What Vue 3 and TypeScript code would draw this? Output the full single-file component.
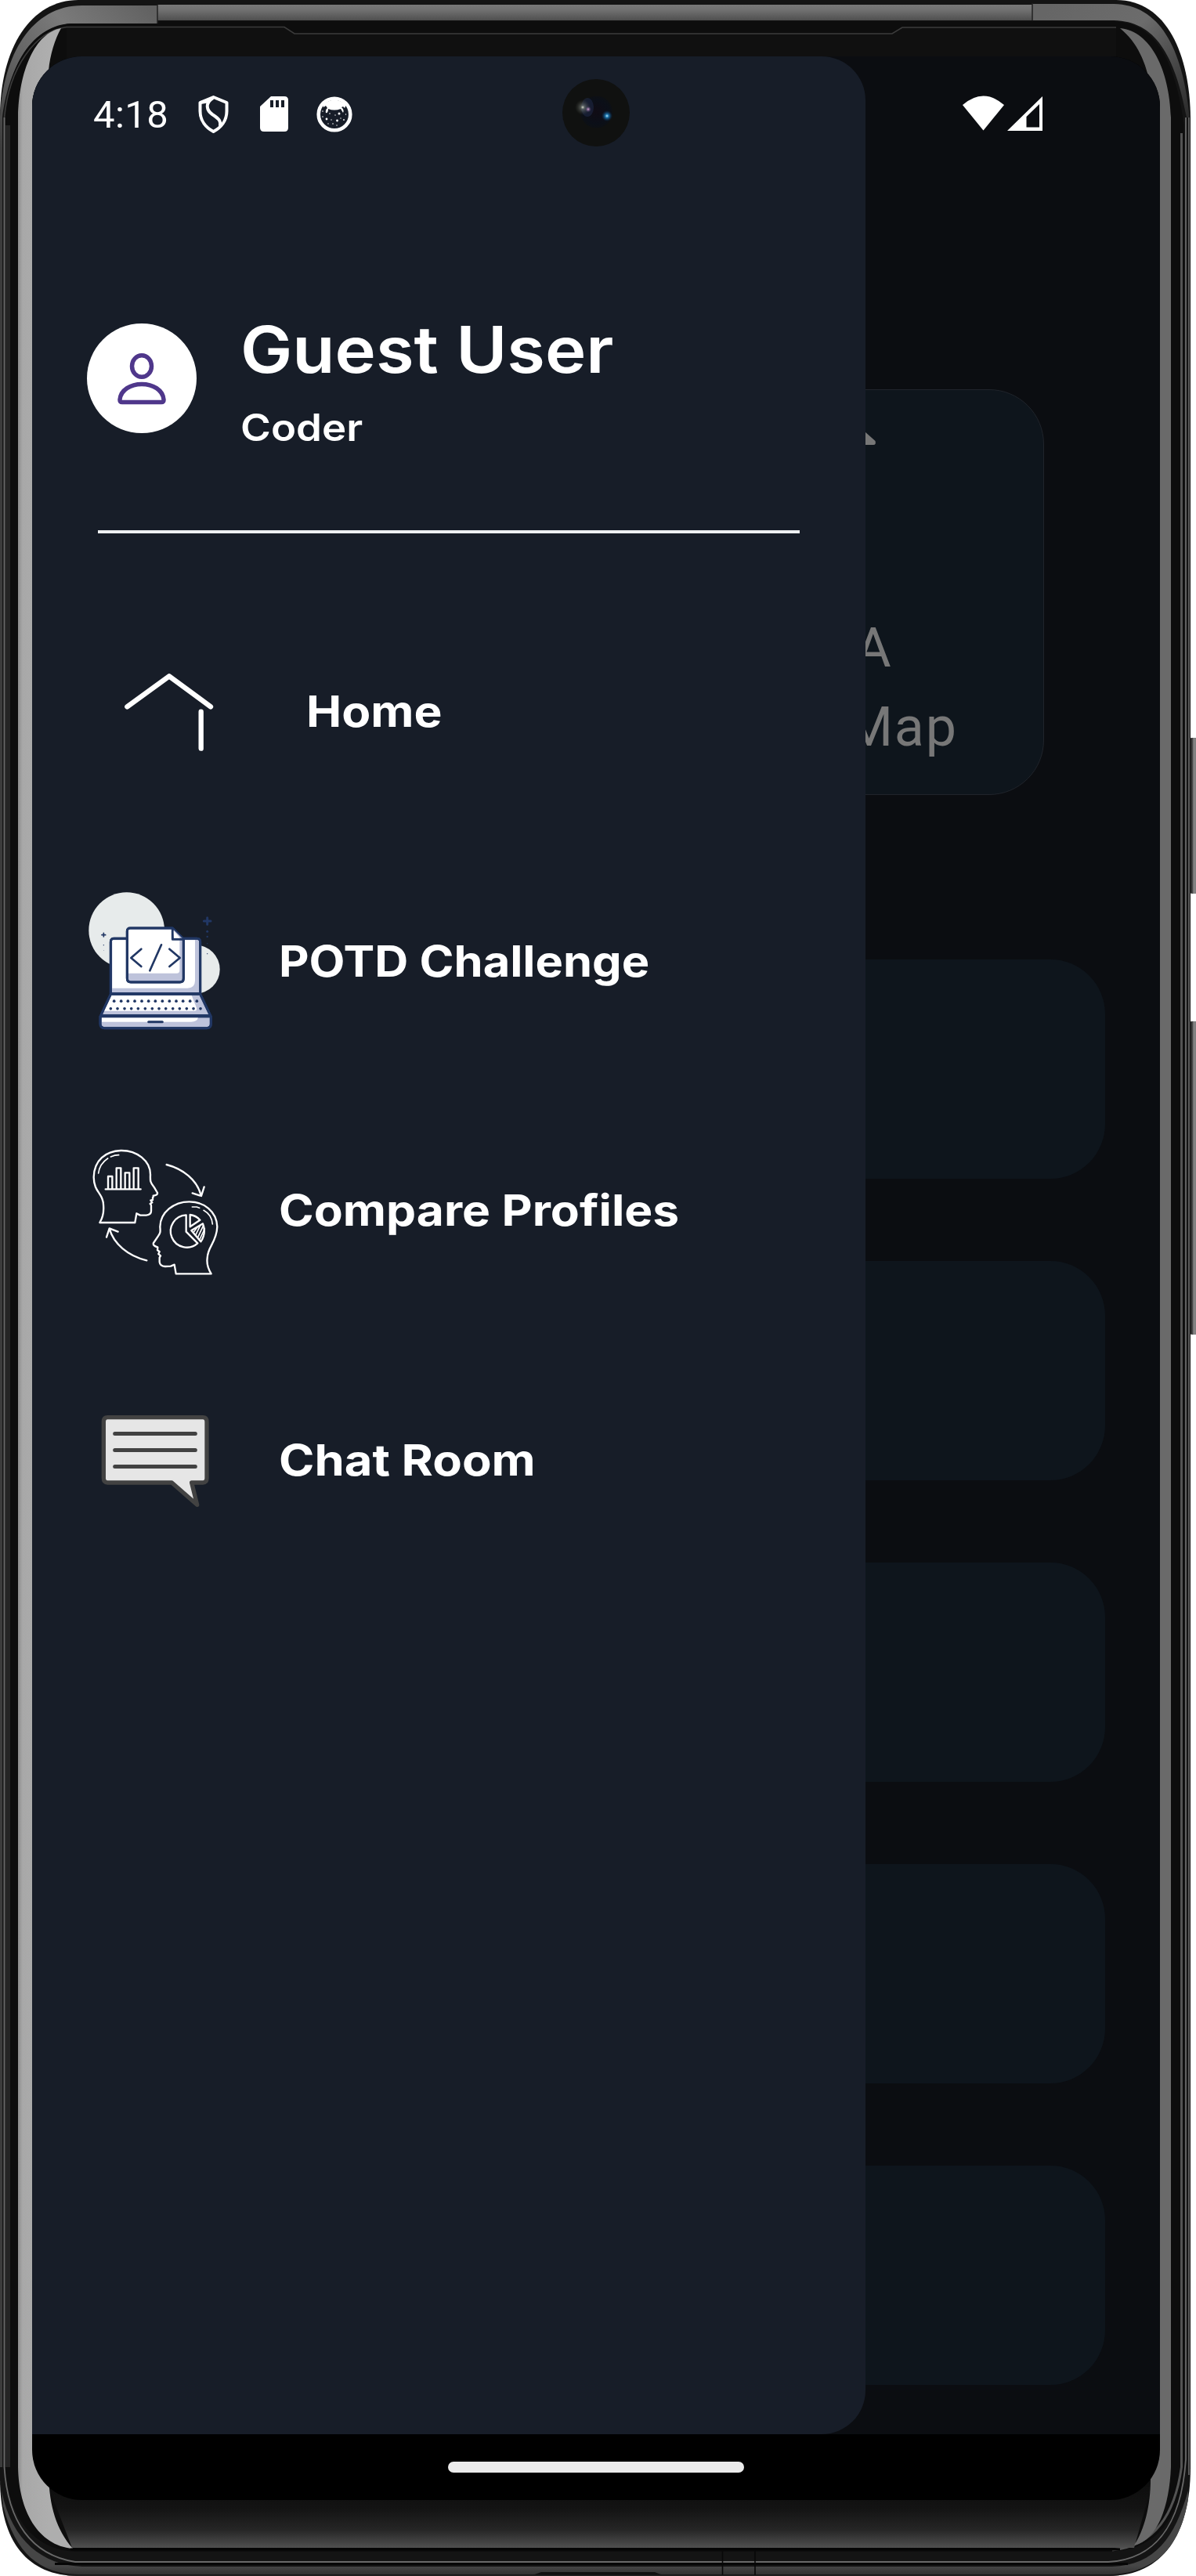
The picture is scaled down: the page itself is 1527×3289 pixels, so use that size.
<script setup lang="ts">
interface MenuItem {
  id: string
  label: string
  stretch: number
}

const menu: MenuItem[] = [
  { id: 'home', label: 'Home', stretch: 1.1 },
  { id: 'potd', label: 'POTD Challenge', stretch: 1.083 },
  { id: 'compare', label: 'Compare Profiles', stretch: 1.1 },
  { id: 'chat', label: 'Chat Room', stretch: 1.118 },
]

const user = { name: 'Guest User', role: 'Coder' }
const topKeys = [167, 194, 220, 246, 273, 299, 325, 352, 379, 405, 431, 458, 484]
const bottomKeys = [154, 180, 207, 233, 259, 286, 313, 339, 365, 392, 418, 445, 471, 498]
</script>

<template>
  <div class="device">
    <svg class="bezel" viewBox="0 0 1527 3289" aria-hidden="true">
      <defs>
        <linearGradient id="topBand" x1="0" y1="5" x2="0" y2="28" gradientUnits="userSpaceOnUse">
          <stop offset="0" stop-color="#7a7a7a" />
          <stop offset=".35" stop-color="#707070" />
          <stop offset="1" stop-color="#4a4a4a" />
        </linearGradient>
        <linearGradient id="cornerLeft" x1="190" y1="10" x2="0" y2="190" gradientUnits="userSpaceOnUse">
          <stop offset="0" stop-color="#626262" />
          <stop offset=".35" stop-color="#7a7a7a" />
          <stop offset=".65" stop-color="#626262" />
          <stop offset="1" stop-color="#3c3c3c" />
        </linearGradient>
        <linearGradient id="cornerRight" x1="1340" y1="10" x2="1520" y2="180" gradientUnits="userSpaceOnUse">
          <stop offset="0" stop-color="#666" />
          <stop offset=".4" stop-color="#6c6c6c" />
          <stop offset=".7" stop-color="#444" />
          <stop offset="1" stop-color="#202020" />
        </linearGradient>
        <linearGradient id="chin" x1="0" y1="0" x2="0" y2="1">
          <stop offset="0" stop-color="#0e0e0e" />
          <stop offset=".35" stop-color="#131313" />
          <stop offset=".7" stop-color="#252525" />
          <stop offset="1" stop-color="#505050" />
        </linearGradient>
        <linearGradient id="lowBand" x1="0" y1="3276" x2="0" y2="3288" gradientUnits="userSpaceOnUse">
          <stop offset="0" stop-color="#464646" />
          <stop offset="1" stop-color="#303030" />
        </linearGradient>
        <linearGradient id="glassLeft" x1="23" y1="0" x2="62" y2="0" gradientUnits="userSpaceOnUse">
          <stop offset="0" stop-color="#8d8d8d" />
          <stop offset=".15" stop-color="#a8a8a8" />
          <stop offset="1" stop-color="#aeaeae" />
        </linearGradient>
        <linearGradient id="key" x1="0" y1="0" x2="1" y2="0">
          <stop offset="0" stop-color="#1d1d1d" />
          <stop offset=".35" stop-color="#333" />
          <stop offset=".5" stop-color="#858585" />
          <stop offset="1" stop-color="#777" />
        </linearGradient>
        <clipPath id="body">
          <path d="M100 0H1425C1490 0 1519 70 1520 150V3150C1520 3235 1485 3289 1415 3289H100C35 3289 0 3245 0 3165V150C0 60 40 0 100 0Z" />
        </clipPath>
      </defs>
      <rect x="1517" y="942" width="14" height="199" rx="5" fill="url(#key)" />
      <rect x="1517" y="1304" width="14" height="400" rx="5" fill="url(#key)" />
      <g clip-path="url(#body)">
        <rect width="1527" height="3289" fill="#141414" />
        <path d="M0 3150V150C4 70 40 7 105 7H201V30H90C45 32 12 80 3 150V3150Z" fill="url(#cornerLeft)" />
        <path d="M201 6H1318V26H201Z" fill="url(#topBand)" />
        <path d="M1318 5H1422C1480 6 1510 60 1519 150H1515C1500 70 1475 27 1422 26H1318Z" fill="url(#cornerRight)" />
        <path d="M7 230V150C10 85 40 31 95 30H201V27H1420C1475 28 1500 75 1512 160V3140C1510 3210 1480 3257 1415 3258H100C40 3257 10 3210 7 3150Z" fill="#0d0d0d" />
        <path d="M201 6V30M1318 4V26" stroke="#222" stroke-width="1.5" />
        <path d="M85 35H363L376 43H1139L1152 35H1425V80H85Z" fill="#101010" />
        <path d="M5.500 3150V150C12 85 45 40 85 34.500H363L376 43H1139L1152 35H1425" fill="none" stroke="#3b3b3b" stroke-width="1.600" />
        <path d="M5.500 150V3150C10 3220 40 3262 96 3271H1415C1470 3268 1508 3230 1514 3140V150" fill="none" stroke="#696969" stroke-width="1.800" />
        <path d="M10 160V3150" stroke="#252525" stroke-width="6" />
        <path d="M1508.500 170V3150C1500 3210 1475 3250 1420 3256" fill="none" stroke="#535353" stroke-width="3" />
        <path d="M1518 150V3160" stroke="#5a5a5a" stroke-width="2" />
        <path d="M62 3175H1470L1448 3253H92Z" fill="url(#chin)" />
        <path d="M78 36C45 42 24 90 23 150V3150C24 3205 48 3250 93 3254C72 3230 63 3200 62 3160V90C64 70 70 50 78 36Z" fill="url(#glassLeft)" />
        <path d="M1430 36C1470 40 1493 90 1495 150V3150C1493 3200 1478 3243 1448 3250C1461 3230 1469 3200 1469 3165V110C1463 80 1453 55 1430 36Z" fill="#6a6a6a" />
        <path d="M90 3255H1430" stroke="#050505" stroke-width="3" />
        <path d="M2 3180C15 3245 55 3275 105 3277H1420C1475 3275 1500 3240 1517 3180V3210C1500 3260 1465 3287 1415 3287H100C50 3286 20 3260 4 3200Z" fill="url(#lowBand)" />
        <path d="M70 3273.500H1440" stroke="#070707" stroke-width="3" />
        <path d="M680 3288L691 3284H836L846 3288Z" fill="#111" />
        <path d="M922.500 3257V3288M964 3257V3288" stroke="#080808" stroke-width="1.600" />
        <path d="M80 3288.500H1440" stroke="#222" stroke-width="1.500" />
      </g>
    </svg>

    <div class="screen">
      <div class="app">
        <main class="page">
          <section class="feature">
            <svg class="feature-icon" viewBox="0 0 60 17" preserveAspectRatio="xMinYMin slice"><path d="M0 0H32L45.500 12Q47 17 43 17H0Z" fill="#777" /></svg>
            <div class="feature-text">
              <span>A</span>
              <span>Map</span>
            </div>
          </section>
          <section class="list">
            <div v-for="n in 5" :key="n" class="row-card"></div>
          </section>
        </main>

        <aside class="drawer">
          <header class="profile">
            <div class="avatar">
              <svg viewBox="0 0 140 140" fill="none" stroke="#4f378b" stroke-width="5.500">
                <ellipse cx="70" cy="54.500" rx="12.500" ry="13.800" />
                <path d="M42 97.500C43 84.500 56 77.500 70 77.500S97 84.500 98 97.500Q98 100.500 95 100.500H45Q42 100.500 42 97.500Z" />
              </svg>
            </div>
            <div class="who">
              <h1>{{ user.name }}</h1>
              <p>{{ user.role }}</p>
            </div>
          </header>
          <div class="divider"></div>
          <nav class="menu">
            <a v-for="item in menu" :key="item.id" :class="['item', item.id]">
              <svg v-if="item.id === 'home'" class="icon" viewBox="-30 -81 660 690" fill="none" stroke="#fff" stroke-width="19" stroke-linecap="round" stroke-linejoin="round">
                <path d="M187 247L348 130L507 247M470 266V407" />
              </svg>

              <svg v-else-if="item.id === 'potd'" class="icon" viewBox="0 5 660 690">
                <circle cx="215" cy="232" r="145" fill="#e7ebeb" />
                <circle cx="479" cy="382" r="93" fill="#e7ebeb" />
                <g stroke="#213764" stroke-width="9" stroke-linejoin="round" stroke-linecap="round">
                  <path d="M154 475V277Q154 264 167 264H484Q497 264 497 277V475Z" fill="#bec3db" />
                  <path d="M160 454V270H477V425Q477 454 448 454Z" fill="#fff" stroke="none" />
                  <path d="M154 475V277Q154 264 167 264H484Q497 264 497 277V475Z" fill="none" />
                  <path d="M217 236Q217 224 229 224H391L433 266V416Q433 431 419 431H231Q217 431 217 416Z" fill="#bec3db" />
                  <path d="M222 229H387V268H418V386Q418 397 407 397H222Z" fill="#fff" stroke="none" />
                  <path d="M217 236Q217 224 229 224H391L433 266V416Q433 431 419 431H231Q217 431 217 416Z" fill="none" />
                  <path d="M391 226V267H432" fill="#bec3db" />
                  <path d="M395 234L396 262H420Z" fill="#fff" stroke="none" />
                  <path d="M271 304L232 338L271 371M348 288L304 387M379 304L419 338L379 371" fill="none" stroke-width="8" />
                  <path d="M154 477H497L536 559H116Z" fill="#bec3db" />
                  <path d="M158 482H464L483 530Q486 541 474 541H129Z" fill="#fff" stroke="none" />
                  <path d="M154 477H497L536 559H116Z" fill="none" />
                  <path d="M114 562H538V591Q538 607 522 607H130Q114 607 114 591Z" fill="#bec3db" />
                  <path d="M120 567H489Q485 583 462 583H120Z" fill="#fff" stroke="none" />
                  <path d="M114 562H538V591Q538 607 522 607H130Q114 607 114 591Z" fill="none" />
                  <path d="M299 583H352" />
                </g>
                <g fill="#213764">
                  <circle v-for="x in topKeys" :key="'a' + x" :cx="x" cy="503.500" r="5.500" />
                  <circle v-for="x in bottomKeys" :key="'b' + x" :cx="x" cy="532.500" r="5.500" />
                  <circle cx="524" cy="237" r="4.500" />
                  <circle cx="524" cy="257" r="3.500" />
                  <circle cx="524" cy="283" r="2" />
                  <circle cx="524" cy="322" r="2" />
                  <circle cx="127" cy="289" r="2" />
                  <circle cx="127" cy="310" r="1" />
                </g>
                <path d="M524 184V210M511 197H537" stroke="#213764" stroke-width="9" stroke-linecap="round" />
                <path d="M127 243V257M120 250H134" stroke="#213764" stroke-width="5" stroke-linecap="round" />
              </svg>

              <svg v-else-if="item.id === 'compare'" class="icon" viewBox="0 -29 660 690" fill="none" stroke="#fff" stroke-width="7" stroke-linecap="round" stroke-linejoin="round">
                <path d="M112 364Q130 335 126 295C125 250 90 250 89 190C90 125 135 90 193 88C255 87 306 128 306 180C305 205 305 210 320 228L333 250Q334 259 317 261Q319 265 315 268V277L307 279L313 287L305 292Q310 295 309 302V320Q309 334 290 336H267L253 329L247 364Z" />
                <path d="M107 175C110 150 122 132 143 118M154 112Q170 105 185 105" stroke-width="5" />
                <path d="M134 236H269M144 234V187H160V234M176 234V155H193V234M209 234V173H226V234M242 234V155H260V234" />
                <path d="M368 142C430 158 485 200 500 260M467 251L501 262L512 227" />
                <path d="M292 509C220 492 165 445 149 387M138 420L149 386L182 399" />
                <path d="M539 560Q520 530 524 500C525 455 560 440 562 380C560 320 510 284 455 284C395 284 344 325 343 380C345 400 344 405 335 417L318 442Q314 453 334 458L333 470L341 475L337 484L345 491L341 498V515Q343 531 362 532L384 531L398 525L404 560Z" />
                <path d="M466 304H483L494 308M510 317C530 328 542 345 544 370" stroke-width="5" />
                <path d="M443 335A62 62 0 1 0 487 443L443 399Z" />
                <path d="M458 334V380L496 354Q480 336 458 334ZM507 368L463 394L499 437Q521 405 507 368Z" />
                <path d="M470 403L486 381M479 412L498 373M487 422L509 375M494 430L514 388" stroke-width="5" />
              </svg>

              <svg v-else class="icon" viewBox="0 -63 660 690">
                <path d="M142 119H507Q522 119 522 136V352Q522 369 507 369H464L485 454L388 369H142Q127 369 127 352V136Q127 119 142 119Z" fill="#e6e6e6" stroke="#424242" stroke-width="16" stroke-linejoin="round" />
                <path d="M170 181.500H478M170 244.500H478M170 307.500H478" stroke="#424242" stroke-width="15" stroke-linecap="round" />
              </svg>
              <span class="label" :style="{ transform: `scaleX(${item.stretch})` }">{{ item.label }}</span>
            </a>
          </nav>
        </aside>
      </div>

      <footer class="gesture"><div class="pill"></div></footer>

      <div class="status">
        <span class="time">4:18</span>
        <svg class="shield" viewBox="0 0 39 48" fill="none" stroke="#fff" stroke-width="4" stroke-linejoin="round">
          <path d="M19.500 2L2.500 9V20C2.500 32 10 41 19.500 46C29 41 36.500 32 36.500 20V9Z" />
          <path d="M19 3C8 10 11 19 18 24C27 30 29 32 28 39M3 9L14 7" />
        </svg>
        <svg class="sd" viewBox="0 0 36 45">
          <path d="M14 0H31Q36 0 36 5V40Q36 45 31 45H5Q0 45 0 40V13Z" fill="#fff" />
          <path d="M13 5H17V14H13ZM20 5H24V14H20ZM27 5H31V14H27Z" fill="#171d28" />
        </svg>
        <svg class="cat" viewBox="0 0 46 46">
          <circle cx="23" cy="23" r="20.300" fill="none" stroke="#fff" stroke-width="4.600" />
          <path d="M8 11Q23-2 38 11L36 15L34 13L32 14Q36 17 34 21L31 16Q23 19 15 16Q15 22 12 21Q11 17 14 15L12 12L9 14Z" fill="#fff" />
          <g fill="#fff">
            <circle cx="17" cy="22" r=".8" /><circle cx="29" cy="22" r="1.500" /><circle cx="24" cy="24" r=".7" />
            <circle cx="8" cy="26" r=".8" /><circle cx="13" cy="29" r="1.400" /><circle cx="19" cy="30" r=".7" />
            <circle cx="26.500" cy="31" r="1.400" /><circle cx="31" cy="28" r=".7" /><circle cx="35" cy="30" r=".9" />
            <circle cx="15" cy="35" r=".7" /><circle cx="21" cy="35" r=".8" /><circle cx="26" cy="37" r=".7" />
            <circle cx="37.500" cy="23" r=".7" /><circle cx="8" cy="19" r=".8" />
          </g>
        </svg>
        <span class="spacer"></span>
        <svg class="signal" viewBox="0 0 102 46" fill="#fff">
          <path d="M0 12Q26.500-11 53 12L26.500 44.500Z" />
          <path fill-rule="evenodd" d="M102 1V45H57ZM98 11L81.500 27V40.500H98Z" />
        </svg>
      </div>

      <svg class="camera" viewBox="0 0 86 86" aria-hidden="true">
        <defs>
          <radialGradient id="lens" cx=".5" cy=".5" r=".5">
            <stop offset="0" stop-color="#100c15" />
            <stop offset=".75" stop-color="#0b0f18" />
            <stop offset="1" stop-color="#0d1014" />
          </radialGradient>
          <radialGradient id="glintWarm"><stop offset="0" stop-color="#d9dccb" /><stop offset=".25" stop-color="#7e857f" stop-opacity=".6" /><stop offset="1" stop-color="#3a3d36" stop-opacity="0" /></radialGradient>
          <radialGradient id="glintPink"><stop offset="0" stop-color="#dba6d6" /><stop offset="1" stop-color="#4b3a6b" stop-opacity="0" /></radialGradient>
          <radialGradient id="glintBlue"><stop offset="0" stop-color="#b9ecff" /><stop offset=".3" stop-color="#1d76ad" /><stop offset="1" stop-color="#0b2f58" stop-opacity="0" /></radialGradient>
        </defs>
        <circle cx="43" cy="43" r="43" fill="#101110" />
        <circle cx="43.500" cy="42" r="20.500" fill="url(#lens)" />
        <ellipse cx="32" cy="36" rx="8" ry="12" fill="#2a3a63" opacity=".35" />
        <circle cx="26" cy="36" r="10" fill="url(#glintWarm)" />
        <circle cx="33" cy="38.500" r="4" fill="url(#glintPink)" />
        <circle cx="57" cy="47" r="7" fill="url(#glintBlue)" />
      </svg>
    </div>
  </div>
</template>

<style>
body {
  margin: 0;
  background: #fff;
}
</style>

<style scoped>
.device {
  position: relative;
  width: 1527px;
  height: 3289px;
  overflow: hidden;
  font-family: Inter, 'Open Sans', sans-serif;
}
.device::before {
  content: '';
  display: table;
}
.bezel {
  position: absolute;
  inset: 0;
  width: 1527px;
  height: 3289px;
}
.screen {
  position: relative;
  box-sizing: border-box;
  width: 1440px;
  height: 3120px;
  margin: 72px 0 0 41px;
  border-radius: 64px;
  overflow: hidden;
  background: #000;
}
.app {
  display: grid;
  height: 3036px;
  background: #0b0d11;
  overflow: hidden;
}
.page,
.drawer {
  grid-area: 1 / 1;
}
.page {
  display: flex;
  flex-direction: column;
  gap: 210px;
  padding-top: 425px;
}
.feature {
  box-sizing: border-box;
  width: 300px;
  height: 518px;
  margin-left: 992px;
  padding: 53px 0 0 38px;
  border: 1px solid #20242b;
  border-radius: 70px;
  background: #0e151c;
}
.feature-icon {
  display: block;
  width: 60px;
  height: 17px;
}
.feature-text {
  display: flex;
  flex-direction: column;
  padding-top: 209px;
  margin-left: 20px;
  font: 400 70px/101px Roboto, sans-serif;
  letter-spacing: 1.750px;
  color: #777;
}
.feature-text span:last-child {
  margin-left: -13px;
}
.list {
  display: flex;
  flex-direction: column;
  gap: 105px;
}
.row-card {
  height: 280px;
  margin: 0 70px;
  border-radius: 70px;
  background: #0e151c;
}
.drawer {
  z-index: 1;
  box-sizing: border-box;
  width: 1064px;
  border-radius: 0 56px 56px 0;
  background: #171d28;
  color: #fff;
}
.profile {
  display: flex;
  gap: 56px;
  padding: 341px 0 0 70px;
  height: 264px;
}
.avatar {
  width: 140px;
  height: 140px;
  border-radius: 50%;
  background: #fff;
}
.avatar svg {
  display: block;
  width: 140px;
  height: 140px;
}
.who h1 {
  margin: -25px 0 0;
  font-size: 82px;
  line-height: 118px;
  font-weight: 600;
  white-space: nowrap;
  transform: scaleX(1.08);
  transform-origin: left;
}
.who p {
  margin: 5px 0 0;
  font-size: 48px;
  line-height: 70px;
  font-weight: 600;
  transform: scaleX(1.1);
  transform-origin: left;
}
.divider {
  width: 896px;
  height: 4px;
  margin-left: 84px;
  background: #eef0f2;
}
.menu {
  display: flex;
  flex-direction: column;
  gap: 88.700px;
  padding: 112px 0 0 49px;
}
.item {
  display: flex;
  align-items: center;
  height: 230px;
}
.icon {
  flex: none;
  width: 220px;
  height: 230px;
}
.label {
  margin-left: 46px;
  font-size: 55px;
  line-height: 70px;
  font-weight: 700;
  white-space: nowrap;
  transform-origin: left;
}
.home .label {
  margin-left: 81px;
}
.gesture {
  display: flex;
  align-items: center;
  justify-content: center;
  height: 84px;
}
.pill {
  width: 378px;
  height: 14px;
  border-radius: 7px;
  background: #ebebeb;
}
.status {
  position: absolute;
  z-index: 2;
  top: 50px;
  left: 0;
  right: 0;
  display: flex;
  align-items: flex-start;
  padding: 0 150px 0 78px;
}
.time {
  width: 134px;
  font: 400 49px/50px Roboto, sans-serif;
  letter-spacing: 0.4px;
  color: #fff;
}
.shield {
  width: 39px;
  height: 48px;
}
.sd {
  width: 36px;
  height: 45px;
  margin: 1px 0 0 40px;
}
.cat {
  width: 46px;
  height: 46px;
  margin: 1px 0 0 36px;
}
.spacer {
  flex: 1;
}
.signal {
  width: 102px;
  height: 46px;
}
.camera {
  position: absolute;
  z-index: 3;
  top: 29px;
  left: 677px;
  width: 86px;
  height: 86px;
}
</style>
